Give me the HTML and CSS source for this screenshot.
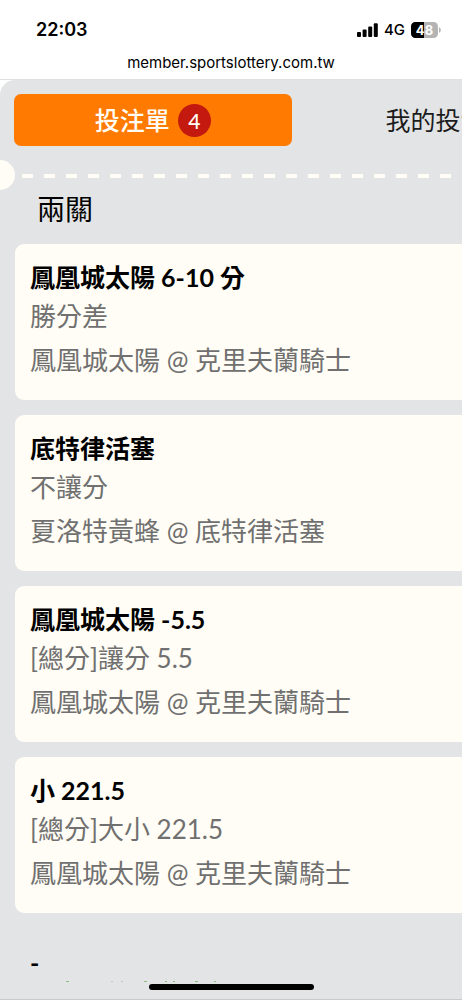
FILE: index.html
```
<!DOCTYPE html>
<html lang="zh-Hant">
<head>
<meta charset="utf-8">
<meta name="viewport" content="width=device-width, initial-scale=1">
<title>投注單</title>
<link rel="stylesheet" href="styles.css">
</head>
<body>
<header class="browser">
  <div class="status">
    <time class="clock">22:03</time>
    <div class="indicators">
      <svg class="signal" width="21" height="14" viewBox="0 0 21 14" aria-hidden="true">
        <rect x="0" y="9" width="4" height="5" rx="1"/>
        <rect x="5.6" y="6.5" width="4" height="7.5" rx="1"/>
        <rect x="11.2" y="3.5" width="4" height="10.5" rx="1"/>
        <rect x="16.8" y="0.3" width="4" height="13.7" rx="1"/>
      </svg>
      <span class="network">4G</span>
      <svg class="battery" width="30" height="16" viewBox="0 0 30 16" aria-label="48%">
        <rect width="27" height="16" rx="4.5" fill="#b4b4b4"/>
        <path d="M13 0H4.5A4.5 4.5 0 0 0 0 4.5v7A4.5 4.5 0 0 0 4.5 16H13z" fill="#000"/>
        <path d="M28 5.2c2.4.8 2.4 4.8 0 5.6z" fill="#b4b4b4"/>
        <text class="level" x="13.5" y="13" text-anchor="middle">48</text>
      </svg>
    </div>
  </div>
  <div class="address">member.sportslottery.com.tw</div>
</header>
<main class="page">
  <div class="sheet">
    <nav class="tabs">
      <button class="tab active" type="button">投注單 <span class="count">4</span></button>
      <button class="tab" type="button">我的投注</button>
    </nav>
    <div class="tear">
      <span class="notch"></span>
      <span class="dashes"></span>
    </div>
    <h1 class="heading">兩關</h1>
    <section class="bets">
      <article class="bet">
        <h2 class="pick">鳳凰城太陽 6-10 分</h2>
        <p class="market">勝分差</p>
        <p class="match">鳳凰城太陽 @ 克里夫蘭騎士</p>
      </article>
      <article class="bet">
        <h2 class="pick">底特律活塞</h2>
        <p class="market">不讓分</p>
        <p class="match">夏洛特黃蜂 @ 底特律活塞</p>
      </article>
      <article class="bet">
        <h2 class="pick">鳳凰城太陽 -5.5</h2>
        <p class="market">[總分]讓分 5.5</p>
        <p class="match">鳳凰城太陽 @ 克里夫蘭騎士</p>
      </article>
      <article class="bet">
        <h2 class="pick">小 221.5</h2>
        <p class="market">[總分]大小 221.5</p>
        <p class="match">鳳凰城太陽 @ 克里夫蘭騎士</p>
      </article>
    </section>
    <p class="total">-</p>
    <svg class="specks" width="190" height="1" viewBox="0 0 190 1" aria-hidden="true">
      <path d="M36 .5h3M114 .5h3M135 .5h2M143 .5h2M165 .5h3M184 .5h2" stroke="#8fbc85"/>
      <path d="M81 .5h2M91 .5h2" stroke="#bccbbb"/>
    </svg>
  </div>
</main>
<div class="home-bar"></div>
</body>
</html>
```
FILE: styles.css
```
* {
  box-sizing: border-box;
}

body {
  margin: 0;
  min-height: 100vh;
  display: flex;
  flex-direction: column;
  overflow: hidden;
  background: #fff;
  color: #000;
  font-family: Lato, "Noto Sans CJK TC", sans-serif;
}

h1, h2, p {
  margin: 0;
}

.browser {
  font-family: Inter, sans-serif;
  border-bottom: 1px solid #e0e0e2;
}

.status {
  display: flex;
  justify-content: space-between;
  align-items: center;
  padding: 17px 21px 0 36px;
  height: 42px;
}

.clock {
  font-size: 18px;
  font-weight: 600;
}

.indicators {
  display: flex;
  align-items: center;
  gap: 6px;
}

.network {
  font-size: 15px;
  font-weight: 500;
}

.level {
  font: 700 13px Inter, sans-serif;
  fill: #fff;
}

.address {
  padding: 9px 0 4px;
  text-align: center;
  font-size: 15px;
  line-height: 24px;
}

.page {
  flex: 1;
  display: flex;
}

.sheet {
  flex: 1;
  min-width: 0;
  padding-top: 14px;
  border-radius: 15px 0 0 0;
  border-bottom: 1px solid #c9cacc;
  background: #e3e4e6;
}

.tabs {
  display: flex;
  gap: 5px;
  padding-left: 14px;
  overflow: hidden;
}

.tab {
  flex: 0 0 62%;
  display: flex;
  justify-content: center;
  align-items: center;
  gap: 8px;
  height: 52px;
  padding: 0;
  border: 0;
  border-radius: 7px;
  background: none;
  color: #1c1c1c;
  font: 400 25px/34px Lato, "Noto Sans CJK TC", sans-serif;
  white-space: nowrap;
}

.tab.active {
  background: #ff7a00;
  color: #fffdf5;
  font-weight: 500;
}

.count {
  width: 33px;
  height: 33px;
  border-radius: 50%;
  background: #c4190f;
  font-size: 21px;
  line-height: 33px;
  text-align: center;
}

.tear {
  display: flex;
  align-items: center;
  gap: 7px;
  margin-top: 14px;
}

.notch {
  width: 15px;
  height: 30px;
  border-radius: 0 15px 15px 0;
  background: #fffdf5;
}

.dashes {
  flex: 1;
  height: 4px;
  margin-top: 2px;
  background: repeating-linear-gradient(to right, #fffdf5 0 11px, transparent 11px 22px);
}

.heading {
  padding-left: 37px;
  font-size: 28px;
  font-weight: 400;
  line-height: 38px;
}

.bets {
  display: flex;
  flex-direction: column;
  gap: 15px;
  padding: 16px 0 0 15px;
}

.bet {
  padding: 14px 0 16px 15px;
  border-radius: 9px 0 0 9px;
  background: #fffdf5;
}

.pick {
  font-size: 25px;
  font-weight: 700;
  line-height: 38px;
}

.market,
.match {
  color: #707070;
  font-size: 26px;
  font-weight: 400;
  line-height: 40px;
}

.match {
  line-height: 48px;
}

.total {
  padding: 31px 0 0 30px;
  font-size: 25px;
  font-weight: 700;
  line-height: 36px;
}

.specks {
  display: block;
  margin: 1px 0 0 30px;
}

.home-bar {
  position: fixed;
  bottom: 10px;
  left: 50%;
  width: 165px;
  height: 6px;
  margin-left: -82px;
  border-radius: 3px;
  background: #000;
}
```
